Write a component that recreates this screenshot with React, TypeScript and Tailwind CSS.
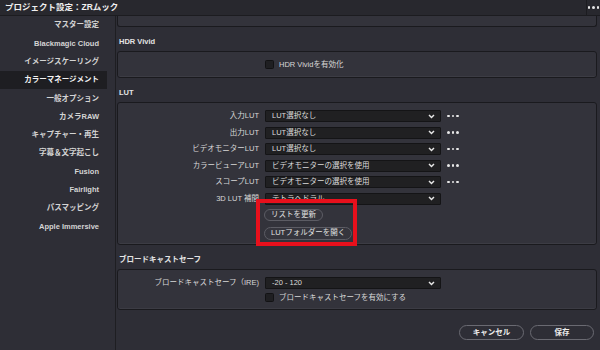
import React from "react";

const NAV = [
  "マスター設定",
  "Blackmagic Cloud",
  "イメージスケーリング",
  "カラーマネージメント",
  "一般オプション",
  "カメラRAW",
  "キャプチャー・再生",
  "字幕＆文字起こし",
  "Fusion",
  "Fairlight",
  "パスマッピング",
  "Apple Immersive",
];

const LUT_ROWS = [
  { label: "入力LUT", value: "LUT選択なし", dots: true },
  { label: "出力LUT", value: "LUT選択なし", dots: true },
  { label: "ビデオモニターLUT", value: "LUT選択なし", dots: true },
  { label: "カラービューアLUT", value: "ビデオモニターの選択を使用", dots: true },
  { label: "スコープLUT", value: "ビデオモニターの選択を使用", dots: true },
  { label: "3D LUT 補間", value: "テトラヘドラル", dots: false },
];

function Dots() {
  return (
    <div className="flex items-center gap-[2px]">
      <span className="h-[2.5px] w-[2.5px] rounded-full bg-[#e8e8e8]" />
      <span className="h-[2.5px] w-[2.5px] rounded-full bg-[#e8e8e8]" />
      <span className="h-[2.5px] w-[2.5px] rounded-full bg-[#e8e8e8]" />
    </div>
  );
}

function Select({ value }: { value: string }) {
  return (
    <div className="flex h-[12px] w-[176px] items-center justify-between rounded-[1px] border border-[#141416] bg-[#202022] pl-[6px] pr-[5px]">
      <span className="text-[7.5px] leading-none text-[#dcdcdc]">{value}</span>
      <svg width="7" height="5" viewBox="0 0 7 5">
        <path d="M1 1 L3.5 3.6 L6 1" fill="none" stroke="#e8e8e8" strokeWidth="1.4" />
      </svg>
    </div>
  );
}

function Checkbox({ label }: { label: string }) {
  return (
    <div className="flex items-center gap-[5px]">
      <span className="h-[9px] w-[9px] rounded-[1.5px] border border-[#121214] bg-[#1f1f22]" />
      <span className="text-[7.5px] leading-none text-[#d8d8d8]">{label}</span>
    </div>
  );
}

function Row({ label, children }: { label: string; children: React.ReactNode }) {
  return (
    <div className="flex h-[12px] items-center">
      <div className="w-[141px] text-right text-[7.5px] leading-none text-[#d8d8d8]">{label}</div>
      <div className="ml-[6px] flex items-center gap-[6px]">{children}</div>
    </div>
  );
}

function Heading({ children }: { children: React.ReactNode }) {
  return (
    <div className="h-[24px] pl-[2px] pt-[10px] text-[7.5px] font-bold leading-[10px] text-[#e4e4e4]">
      {children}
    </div>
  );
}

const panel = "rounded-[3px] border border-[#1a1a1e] bg-[#33333b] shadow-[inset_0_-1px_0_#3c3c44]";

export default function App() {
  return (
    <div className="flex h-[350px] w-[600px] flex-col overflow-hidden bg-[#2e2e36] font-['Liberation_Sans','Noto_Sans_CJK_JP',sans-serif] text-[#d8d8d8]">
      <div className="flex h-[16px] shrink-0 items-center border-b border-[#1c1c20] bg-[#28282e]">
        <div className="flex-1 pl-[5px] text-[8.5px] font-bold leading-none text-[#f0f0f0]">
          プロジェクト設定：ZRムック
        </div>
        <div className="flex h-full w-[14px] items-center justify-center border-l border-[#1c1c20]">
          <Dots />
        </div>
      </div>

      <div className="flex flex-1">
        <div className="w-[116px] shrink-0 border-r border-[#1e1e22]">
          {NAV.map((n, i) => (
            <div
              key={n}
              className={`mr-[8px] flex h-[18.3px] items-center justify-end pr-[8px] text-[7.5px] font-bold leading-none ${
                i === 3 ? "bg-[#1e1e22] text-[#f2f2f2]" : "text-[#d4d4d4]"
              }`}
            >
              {n}
            </div>
          ))}
        </div>

        <div className="flex flex-1 flex-col pl-[1px] pr-[3px]">
          <div className="h-[11px] rounded-b-[3px] border border-t-0 border-[#1a1a1e] bg-[#33333b]" />

          <Heading>HDR Vivid</Heading>
          <div className={`${panel} flex h-[27px] items-center pl-[147px]`}>
            <Checkbox label="HDR Vividを有効化" />
          </div>

          <Heading>LUT</Heading>
          <div className={`${panel} relative h-[143px] pt-[7px]`}>
            <div className="flex flex-col gap-[4.5px]">
              {LUT_ROWS.map((r) => (
                <Row key={r.label} label={r.label}>
                  <Select value={r.value} />
                  {r.dots && <Dots />}
                </Row>
              ))}
            </div>
            <div className="ml-[146px] mt-[4px] flex flex-col items-start gap-[6px]">
              <div className="flex h-[12px] items-center rounded-full border border-[#5c5c64] bg-[#35353d] px-[6px] text-[7.5px] leading-none text-[#e0e0e0]">
                リストを更新
              </div>
              <div className="flex h-[13px] items-center rounded-full border border-[#5c5c64] bg-[#35353d] px-[6px] text-[7.5px] leading-none text-[#e0e0e0]">
                LUTフォルダーを開く
              </div>
            </div>
            <div className="absolute left-[138px] top-[96px] h-[47px] w-[101px] border-[4px] border-[#e8101c]" />
          </div>

          <Heading>ブロードキャストセーフ</Heading>
          <div className={`${panel} h-[41px] pt-[7px]`}>
            <Row label="ブロードキャストセーフ（IRE)">
              <Select value="-20 - 120" />
            </Row>
            <div className="ml-[147px] mt-[4px]">
              <Checkbox label="ブロードキャストセーフを有効にする" />
            </div>
          </div>

          <div className="mt-[15px] flex justify-end gap-[6px] pr-[3px]">
            <div className="flex h-[15px] w-[65px] items-center justify-center rounded-full border-[1.5px] border-[#6a6a72] text-[7.5px] font-bold leading-none text-[#eeeeee]">
              キャンセル
            </div>
            <div className="flex h-[15px] w-[64px] items-center justify-center rounded-full border-[1.5px] border-[#6a6a72] text-[7.5px] font-bold leading-none text-[#eeeeee]">
              保存
            </div>
          </div>
        </div>
      </div>
    </div>
  );
}
